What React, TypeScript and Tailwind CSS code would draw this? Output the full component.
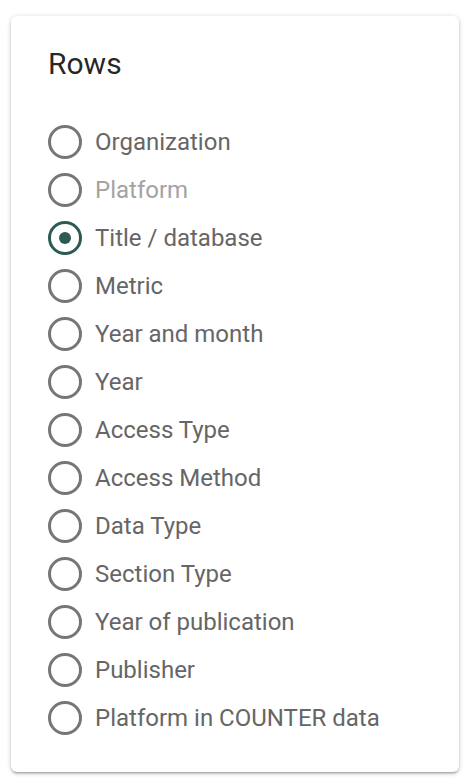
import React from "react";

const rows = [
  { label: "Organization" },
  { label: "Platform", disabled: true },
  { label: "Title / database", checked: true },
  { label: "Metric" },
  { label: "Year and month" },
  { label: "Year" },
  { label: "Access Type" },
  { label: "Access Method" },
  { label: "Data Type" },
  { label: "Section Type" },
  { label: "Year of publication" },
  { label: "Publisher" },
  { label: "Platform in COUNTER data" },
];

function Radio({ checked }: { checked?: boolean }) {
  return (
    <span
      className={`flex h-[34px] w-[34px] shrink-0 items-center justify-center rounded-full border-[3px] ${
        checked ? "border-[#2c5b53]" : "border-[#767676]"
      }`}
    >
      {checked && <span className="h-[12px] w-[12px] rounded-full bg-[#2c5b53]" />}
    </span>
  );
}

export default function App() {
  return (
    <div className="min-h-screen bg-white pl-[11px] pt-[16px] font-['Roboto',sans-serif]">
      <div className="h-[756px] w-[448px] rounded-[6px] bg-white pl-[37px] pt-[30px] shadow-[0_2px_2px_0_rgba(0,0,0,0.14),0_3px_1px_-2px_rgba(0,0,0,0.12),0_1px_5px_0_rgba(0,0,0,0.2)]">
        <h2 className="text-[30px] leading-[36px] text-[rgba(0,0,0,0.87)]">Rows</h2>
        <div className="mt-[36px] flex flex-col">
          {rows.map((r) => (
            <label key={r.label} className="flex h-[48px] items-center gap-[13px]">
              <Radio checked={r.checked} />
              <span
                className={`text-[24px] leading-[28px] ${
                  r.disabled ? "text-[#a3a3a3]" : "text-[#666666]"
                }`}
              >
                {r.label}
              </span>
            </label>
          ))}
        </div>
      </div>
    </div>
  );
}
